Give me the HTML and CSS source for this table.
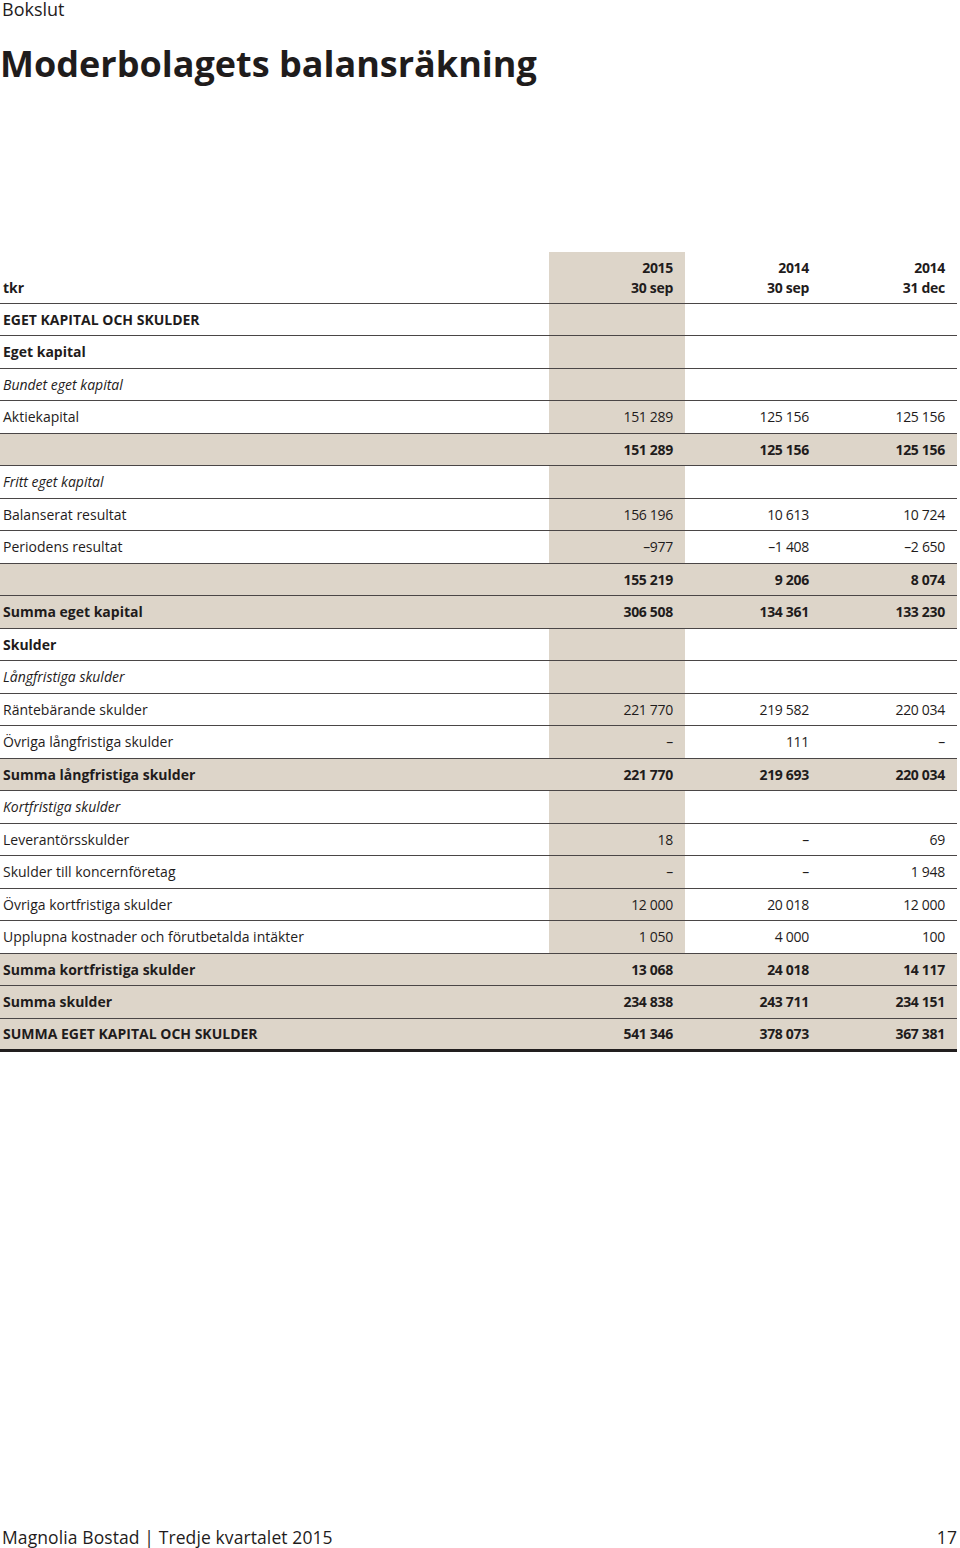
FILE: index.html
```html
<!DOCTYPE html>
<html lang="sv">
<head>
<meta charset="utf-8">
<link rel="stylesheet" href="styles.css">
</head>
<body>
<div class="page">
  <div class="section">Bokslut</div>
  <h1 class="title">Moderbolagets balansräkning</h1>
  <table class="bal">
    <colgroup><col class="c-label"><col class="c-num"><col class="c-num"><col class="c-num"></colgroup>
    <thead>
      <tr class="head">
        <th class="lbl">tkr</th>
        <th class="num hl">2015<br>30 sep</th>
        <th class="num">2014<br>30 sep</th>
        <th class="num">2014<br>31 dec</th>
      </tr>
    </thead>
    <tbody>
      <tr class="b"><td class="lbl">EGET KAPITAL OCH SKULDER</td><td class="num hl"></td><td class="num"></td><td class="num"></td></tr>
      <tr class="b"><td class="lbl">Eget kapital</td><td class="num hl"></td><td class="num"></td><td class="num"></td></tr>
      <tr class="i"><td class="lbl">Bundet eget kapital</td><td class="num hl"></td><td class="num"></td><td class="num"></td></tr>
      <tr><td class="lbl">Aktiekapital</td><td class="num hl">151 289</td><td class="num">125 156</td><td class="num">125 156</td></tr>
      <tr class="sum"><td class="lbl"></td><td class="num hl">151 289</td><td class="num">125 156</td><td class="num">125 156</td></tr>
      <tr class="i"><td class="lbl">Fritt eget kapital</td><td class="num hl"></td><td class="num"></td><td class="num"></td></tr>
      <tr><td class="lbl">Balanserat resultat</td><td class="num hl">156 196</td><td class="num">10 613</td><td class="num">10 724</td></tr>
      <tr><td class="lbl">Periodens resultat</td><td class="num hl">–977</td><td class="num">–1 408</td><td class="num">–2 650</td></tr>
      <tr class="sum"><td class="lbl"></td><td class="num hl">155 219</td><td class="num">9 206</td><td class="num">8 074</td></tr>
      <tr class="sum"><td class="lbl">Summa eget kapital</td><td class="num hl">306 508</td><td class="num">134 361</td><td class="num">133 230</td></tr>
      <tr class="b"><td class="lbl">Skulder</td><td class="num hl"></td><td class="num"></td><td class="num"></td></tr>
      <tr class="i"><td class="lbl">Långfristiga skulder</td><td class="num hl"></td><td class="num"></td><td class="num"></td></tr>
      <tr><td class="lbl">Räntebärande skulder</td><td class="num hl">221 770</td><td class="num">219 582</td><td class="num">220 034</td></tr>
      <tr><td class="lbl">Övriga långfristiga skulder</td><td class="num hl">–</td><td class="num">111</td><td class="num">–</td></tr>
      <tr class="sum"><td class="lbl">Summa långfristiga skulder</td><td class="num hl">221 770</td><td class="num">219 693</td><td class="num">220 034</td></tr>
      <tr class="i"><td class="lbl">Kortfristiga skulder</td><td class="num hl"></td><td class="num"></td><td class="num"></td></tr>
      <tr><td class="lbl">Leverantörsskulder</td><td class="num hl">18</td><td class="num">–</td><td class="num">69</td></tr>
      <tr><td class="lbl">Skulder till koncernföretag</td><td class="num hl">–</td><td class="num">–</td><td class="num">1 948</td></tr>
      <tr><td class="lbl">Övriga kortfristiga skulder</td><td class="num hl">12 000</td><td class="num">20 018</td><td class="num">12 000</td></tr>
      <tr><td class="lbl">Upplupna kostnader och förutbetalda intäkter</td><td class="num hl">1 050</td><td class="num">4 000</td><td class="num">100</td></tr>
      <tr class="sum"><td class="lbl">Summa kortfristiga skulder</td><td class="num hl">13 068</td><td class="num">24 018</td><td class="num">14 117</td></tr>
      <tr class="sum"><td class="lbl">Summa skulder</td><td class="num hl">234 838</td><td class="num">243 711</td><td class="num">234 151</td></tr>
      <tr class="sum total"><td class="lbl">SUMMA EGET KAPITAL OCH SKULDER</td><td class="num hl">541 346</td><td class="num">378 073</td><td class="num">367 381</td></tr>
    </tbody>
  </table>
  <div class="spacer"></div>
  <footer class="foot">
    <span>Magnolia Bostad | Tredje kvartalet 2015</span>
    <span>17</span>
  </footer>
</div>
</body>
</html>
```
FILE: styles.css
```css
* { box-sizing: border-box; }
html, body { margin: 0; padding: 0; background: #fff; }
body {
  font-family: "Open Sans", "Liberation Sans", sans-serif;
  color: #1f1c1c;
}
.page {
  width: 960px;
  height: 1548px;
  display: flex;
  flex-direction: column;
}
.section {
  font-size: 18px;
  line-height: 17px;
  padding-top: 1px;
  padding-left: 2px;
  color: #1f1c1c;
}
.title {
  font-size: 36px;
  font-weight: 700;
  line-height: 44px;
  margin: 24px 0 0 0;
  letter-spacing: 0;
}
.bal {
  margin-top: 166px;
  width: 957px;
  border-collapse: collapse;
  table-layout: fixed;
  font-size: 14px;
}
.c-label { width: 549px; }
.c-num { width: 136px; }
.bal th, .bal td {
  padding: 0;
  height: 32.5px;
  border-bottom: 1.6px solid #4a4646;
  vertical-align: middle;
}
.bal .lbl { text-align: left; padding-left: 3px; }
.bal .num { text-align: right; padding-right: 12px; letter-spacing: -0.3px; }
.bal .hl { background: #ddd5c9; }
.head th {
  height: 51px;
  font-weight: 700;
  line-height: 20px;
  vertical-align: bottom;
  padding-bottom: 5px;
}
.b td { font-weight: 700; }
.i td { font-style: italic; }
.sum td { background: #ddd5c9; font-weight: 700; }
.total td { border-bottom: 3px solid #221f1f; }
.spacer { flex: 1; }
.foot {
  display: flex;
  justify-content: space-between;
  font-size: 17.5px;
  line-height: 20px;
  letter-spacing: 0.1px;
  padding: 0 3px 1px 2px;
}
```
